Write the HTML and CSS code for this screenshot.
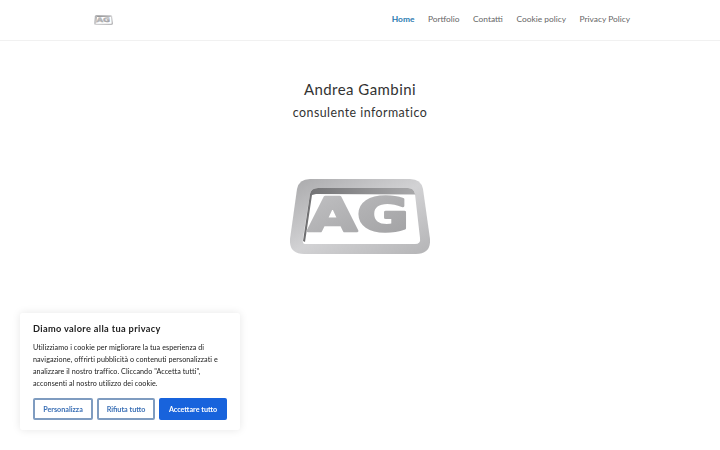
FILE: index.html
```html
<!DOCTYPE html>
<html lang="it">
<head>
    <meta charset="UTF-8">
    <title>Andrea Gambini</title>
    <link rel="stylesheet" href="styles.css">
</head>
<body>
    <svg class="defs" width="0" height="0">
      <defs>
        <linearGradient id="metal" x1="0" y1="0" x2="1" y2="1">
          <stop offset="0" stop-color="#a9a9ab"/>
          <stop offset="0.5" stop-color="#d2d2d4"/>
          <stop offset="1" stop-color="#b4b4b6"/>
        </linearGradient>
        <linearGradient id="band" x1="0" y1="0" x2="1" y2="0">
          <stop offset="0" stop-color="#6f6f71"/>
          <stop offset="1" stop-color="#a8a8aa"/>
        </linearGradient>
        <linearGradient id="letters" x1="0" y1="0" x2="1" y2="1">
          <stop offset="0" stop-color="#c2c2c4"/>
          <stop offset="0.5" stop-color="#b0b0b2"/>
          <stop offset="1" stop-color="#a0a0a2"/>
        </linearGradient>
        <symbol id="logo" viewBox="0 0 140 75">
          <path d="M20 0H120Q131 0 133 10L140 60Q141 75 126 75H14Q-1 75 0 60L7 10Q9 0 20 0Z" fill="url(#metal)"/>
          <path d="M28 9H118Q124 9 125 15L130 59Q131 65 125 65H15Q12 65 13 59L20 15Q21 9 28 9Z" fill="#fff"/>
          <path d="M20 15Q21 9 28 9H118Q124 9 125 15L125.500 15.500L26 15L22 16L15 63L13 62Z" fill="url(#band)"/>
          <text x="18" y="52" font-family="DejaVu Sans" font-weight="700" font-size="46" textLength="101" lengthAdjust="spacingAndGlyphs" fill="url(#letters)" stroke="url(#letters)" stroke-width="2.5" stroke-linejoin="round">AG</text>
        </symbol>
      </defs>
    </svg>

    <header class="site-header">
      <svg class="logo-small" width="19" height="12"><use href="#logo"/></svg>
      <nav>
        <ul class="top-menu">
          <li><a class="active" href="#">Home</a></li>
          <li><a href="#">Portfolio</a></li>
          <li><a href="#">Contatti</a></li>
          <li><a href="#">Cookie policy</a></li>
          <li><a href="#">Privacy Policy</a></li>
        </ul>
      </nav>
    </header>

    <main class="content">
      <h1>Andrea Gambini</h1>
      <h2>consulente informatico</h2>
      <svg class="logo-big" width="140" height="75"><use href="#logo"/></svg>
    </main>

    <div class="cookie-box">
      <p class="cookie-title">Diamo valore alla tua privacy</p>
      <p class="cookie-text">Utilizziamo i cookie per migliorare la tua esperienza di navigazione, offrirti pubblicità o contenuti personalizzati e analizzare il nostro traffico. Cliccando "Accetta tutti", acconsenti al nostro utilizzo dei cookie.</p>
      <div class="cookie-buttons">
        <button class="btn btn-custom">Personalizza</button>
        <button class="btn btn-reject">Rifiuta tutto</button>
        <button class="btn btn-accept">Accettare tutto</button>
      </div>
    </div>
</body>
</html>
```

FILE: styles.css
```css
body {
  margin: 0;
  background: #fff;
  font-family: "Lato", sans-serif;
  color: #333;
  overflow: hidden;
}

.defs {
  display: block;
}

.site-header {
  display: flex;
  align-items: center;
  justify-content: space-between;
  height: 40px;
  padding: 0 90px 0 94px;
  border-bottom: 1px solid #f1f1f1;
}

.logo-small {
  display: block;
}

.top-menu {
  display: flex;
  gap: 13.5px;
  list-style: none;
  margin: 0 0 2px;
  padding: 0;
  line-height: 12px;
}

.top-menu a {
  display: block;
  color: #666;
  font-size: 8.4px;
  text-decoration: none;
}

.top-menu a.active {
  color: #2a7ab0;
  font-weight: 700;
}

.content {
  display: flex;
  flex-direction: column;
  align-items: center;
}

h1 {
  margin: 39px 0 0;
  font-size: 15px;
  line-height: 18px;
  font-weight: 400;
  letter-spacing: 0.45px;
}

h2 {
  margin: 6px 0 0;
  font-size: 12.4px;
  line-height: 18px;
  font-weight: 400;
  letter-spacing: 0.45px;
}

.logo-big {
  display: block;
  margin-top: 57px;
}

.cookie-box {
  position: fixed;
  left: 20px;
  top: 313px;
  width: 220px;
  height: 117px;
  box-sizing: border-box;
  padding: 10px 13px;
  background: #fff;
  border-radius: 3px;
  box-shadow: 0 0 8px rgba(0,0,0,0.1);
}

.cookie-title {
  margin: 0;
  font-size: 9.2px;
  line-height: 12px;
  font-weight: 700;
  color: #212121;
  letter-spacing: 0.35px;
}

.cookie-text {
  margin: 7px 0 0;
  font-size: 7.2px;
  line-height: 12px;
  color: #212121;
  letter-spacing: 0.05px;
}

.cookie-buttons {
  display: flex;
  gap: 4px;
  margin-top: 8px;
}

.btn {
  height: 22px;
  padding: 0;
  box-sizing: border-box;
  border: 2px solid #1863dc;
  border-radius: 2px;
  font-family: "Lato", sans-serif;
  font-size: 7.2px;
  font-weight: 700;
  background: #fff;
  color: #1863dc;
}

.btn-custom {
  width: 60px;
  border-color: #7f9cc0;
  color: #3a6fb5;
}

.btn-reject {
  width: 58px;
  border-color: #7f9cc0;
  color: #3a6fb5;
}

.btn-accept {
  width: 68px;
  background: #1863dc;
  color: #fff;
}
```
